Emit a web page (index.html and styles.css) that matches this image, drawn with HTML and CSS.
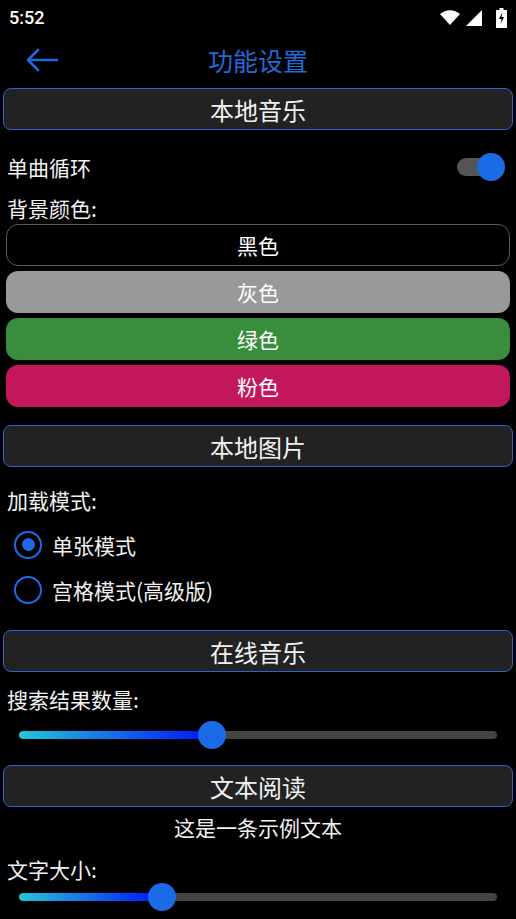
FILE: index.html
```html
<!DOCTYPE html>
<html lang="zh">
<head>
<meta charset="utf-8">
<title>功能设置</title>
<link rel="stylesheet" href="styles.css">
</head>
<body>
<div class="screen">
  <div class="status">
    <span class="time">5:52</span>
    <div class="sicons">
      <svg width="22" height="16" viewBox="0 0 22 16"><path d="M11 15 L1 4 A15 15 0 0 1 21 4 Z" fill="#fff"/></svg>
      <svg width="17" height="16" viewBox="0 0 17 16"><path d="M16 0 L16 16 L0 16 Z" fill="#fff"/></svg>
      <svg class="bat" width="11" height="20" viewBox="0 0 11 20"><path d="M3.5 0 h4 v2 h3.5 v18 h-11 v-18 h3.5 z" fill="#fff"/><path d="M6.5 4 L3 11 H5.5 L4.5 16 L8 9 H5.5 Z" fill="#000"/></svg>
    </div>
  </div>
  <div class="toolbar">
    <svg class="back" width="34" height="24" viewBox="0 0 34 24"><path d="M32 12 H4 M13 2 L3 12 L13 22" fill="none" stroke="#1f68dd" stroke-width="2.6" stroke-linecap="round" stroke-linejoin="round"/></svg>
    <div class="title">功能设置</div>
  </div>

  <div class="header h1">本地音乐</div>
  <div class="row toggle-row">
    <span class="label">单曲循环</span>
    <div class="switch"><div class="track"></div><div class="knob"></div></div>
  </div>
  <div class="label line bg-label">背景颜色:</div>
  <div class="colors">
    <div class="cbtn black">黑色</div>
    <div class="cbtn gray">灰色</div>
    <div class="cbtn green">绿色</div>
    <div class="cbtn pink">粉色</div>
  </div>

  <div class="header h2">本地图片</div>
  <div class="label line load-label">加载模式:</div>
  <div class="radios">
    <div class="radio-row"><span class="radio on"></span><span class="label">单张模式</span></div>
    <div class="radio-row"><span class="radio"></span><span class="label">宫格模式(高级版)</span></div>
  </div>

  <div class="header h3">在线音乐</div>
  <div class="label line search-label">搜索结果数量:</div>
  <div class="slider s1">
    <div class="strack"><div class="sfill" style="width:193px"></div></div>
    <div class="sthumb" style="left:179px"></div>
  </div>

  <div class="header h4">文本阅读</div>
  <div class="label line sample">这是一条示例文本</div>
  <div class="label line size-label">文字大小:</div>
  <div class="slider s2">
    <div class="strack"><div class="sfill" style="width:143px"></div></div>
    <div class="sthumb" style="left:129px"></div>
  </div>
</div>
</body>
</html>
```

FILE: styles.css
```css
html, body {
  margin: 0;
  padding: 0;
  background: #000;
}
.screen {
  width: 516px;
  height: 919px;
  overflow: hidden;
  background: #000;
  color: #fff;
  font-family: "Noto Sans CJK SC", "Noto Sans", Roboto, sans-serif;
  display: flex;
  flex-direction: column;
}
.status {
  height: 36px;
  display: flex;
  align-items: center;
  justify-content: space-between;
  padding: 0 9px 0 9px;
  box-sizing: border-box;
}
.time {
  font-family: Roboto, "Noto Sans", sans-serif;
  font-weight: 500;
  font-size: 18px;
  margin-top: -1px;
}
.sicons {
  display: flex;
  align-items: center;
  gap: 5px;
}
.sicons .bat { margin-left: 8px; }
.toolbar {
  height: 48px;
  position: relative;
  display: flex;
  align-items: center;
  justify-content: center;
}
.back {
  position: absolute;
  left: 25px;
  top: 12px;
}
.title {
  color: #2369d8;
  font-size: 25px;
  line-height: 30px;
}
.header {
  margin: 4px 3px 0 3px;
  height: 42px;
  box-sizing: border-box;
  border: 1.5px solid #2a64d0;
  border-radius: 8px;
  background: #222;
  display: flex;
  align-items: center;
  justify-content: center;
  font-size: 24px;
  color: #f2f2f2;
}
.label {
  font-size: 21px;
  color: #f2f2f2;
}
.line {
  height: 28px;
  line-height: 28px;
  padding-left: 7px;
}
.toggle-row {
  margin-top: 22px;
  height: 30px;
  display: flex;
  align-items: center;
  justify-content: space-between;
  padding: 0 11px 0 7px;
}
.switch {
  position: relative;
  width: 48px;
  height: 30px;
}
.track {
  position: absolute;
  left: 0;
  top: 6px;
  width: 40px;
  height: 18px;
  border-radius: 9px;
  background: #555;
}
.knob {
  position: absolute;
  right: 0;
  top: 1px;
  width: 28px;
  height: 28px;
  border-radius: 50%;
  background: #1b6ae6;
}
.bg-label { margin-top: 12px; }
.colors {
  margin: 2px 6px 0 6px;
  display: flex;
  flex-direction: column;
  gap: 5px;
}
.cbtn {
  height: 42px;
  box-sizing: border-box;
  border-radius: 12px;
  display: flex;
  align-items: center;
  justify-content: center;
  font-size: 21px;
  color: #fff;
}
.black { background: #000; border: 1px solid #5a5a5a; }
.gray { background: #999; }
.green { background: #388e3c; }
.pink { background: #c2185b; }
.h2 { margin-top: 18px; }
.load-label { margin-top: 19px; }
.radios {
  margin-top: 8px;
  display: flex;
  flex-direction: column;
}
.radio-row {
  height: 45px;
  display: flex;
  align-items: center;
  padding-left: 14px;
}
.radio {
  width: 28px;
  height: 28px;
  box-sizing: border-box;
  border: 2.6px solid #1b6ae6;
  border-radius: 50%;
  margin-right: 10px;
  display: flex;
  align-items: center;
  justify-content: center;
}
.radio.on::after {
  content: "";
  width: 13px;
  height: 13px;
  border-radius: 50%;
  background: #1b6ae6;
}
.h3 { margin-top: 18px; }
.search-label { margin-top: 13px; }
.slider {
  position: relative;
  height: 28px;
  margin: 8px 19px 0 19px;
}
.strack {
  position: absolute;
  left: 0;
  right: 0;
  top: 10px;
  height: 8px;
  border-radius: 4px;
  background: #444;
  overflow: hidden;
}
.sfill {
  height: 100%;
  border-radius: 4px;
  background: linear-gradient(to right, #22c8d6, #0010ff);
}
.sthumb {
  position: absolute;
  top: 0;
  width: 28px;
  height: 28px;
  border-radius: 50%;
  background: #1b6ae6;
}
.h4 { margin-top: 16px; }
.sample {
  margin-top: 6px;
  text-align: center;
  padding-left: 0;
}
.size-label { margin-top: 14px; }
.s2 { margin-top: 0; }
```
